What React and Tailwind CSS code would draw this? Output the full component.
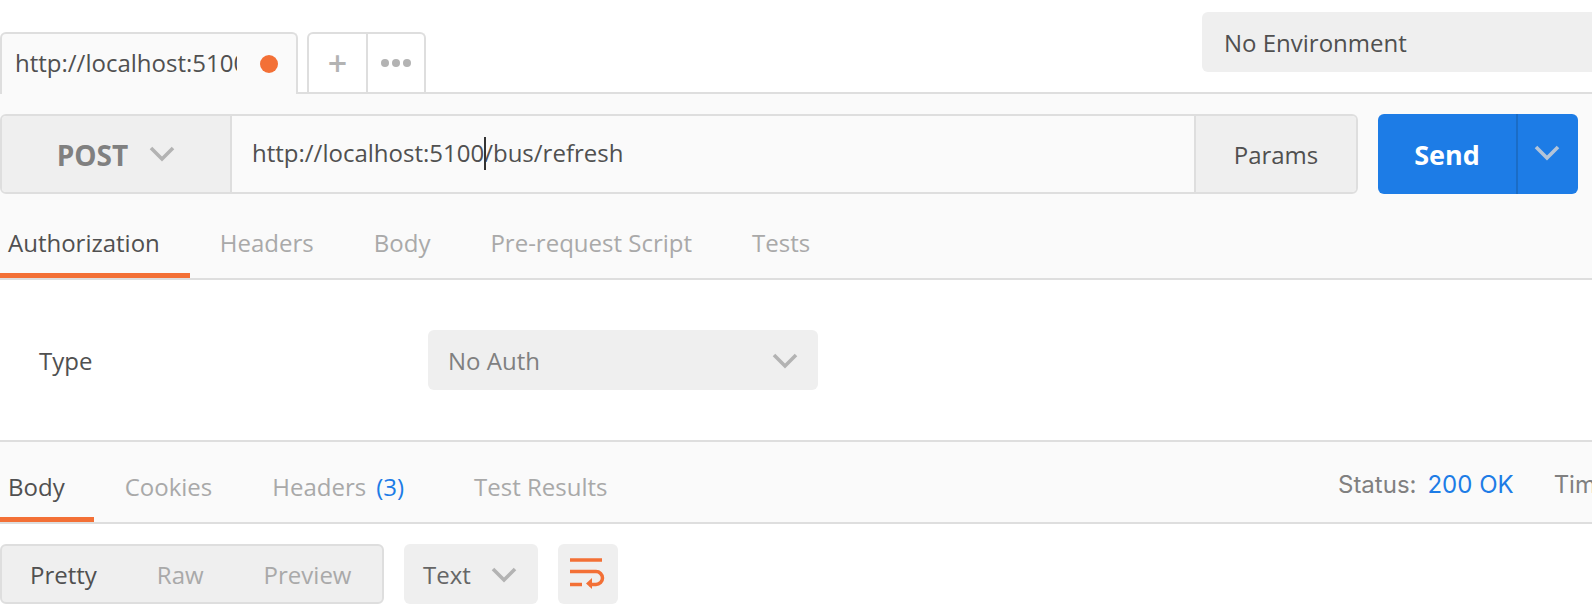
const font = { fontFamily: '"Open Sans", "Noto Sans", sans-serif' };

function Chevron({ className = '' }) {
  return (
    <svg className={className} width="26" height="16" viewBox="0 0 26 16" fill="none" stroke="currentColor" strokeWidth="3.6">
      <polyline points="2,2 13,13 24,2" />
    </svg>
  );
}

function Tab({ label, active, badge, className = '' }) {
  return (
    <div className={`relative flex h-full items-center whitespace-nowrap text-[24px] ${active ? 'text-[#505050]' : 'text-[#a9a9a9]'} ${className}`}>
      {label}
      {badge && <span className="ml-[10px] text-[#1d7ce6]">{badge}</span>}
      {active && <div className="absolute bottom-0 left-0 right-0 h-[5px] bg-[#f37036]" />}
    </div>
  );
}

function WrapIcon() {
  return (
    <svg width="36" height="32" viewBox="0 0 36 32" fill="none" stroke="#f37036" strokeWidth="3.5">
      <path d="M0 2h32" />
      <path d="M0 13.5h26a6.5 6.5 0 0 1 0 13h-7" />
      <path d="M0 26.5h12" />
      <path d="M22 20v11l-6-5.500z" fill="#f37036" stroke="none" />
    </svg>
  );
}

export default function App() {
  return (
    <div className="h-[616px] w-[1592px] overflow-hidden bg-white text-[#505050]" style={font}>
      <div className="flex h-[94px] items-end border-b-2 border-[#dedede] bg-white">
        <div className="relative -mb-[2px] flex h-[62px] w-[298px] items-center rounded-t-[6px] border-2 border-b-0 border-[#dedede] bg-[#fafafa] pl-[13px] pb-[2px]">
          <span className="w-[222px] overflow-hidden whitespace-nowrap text-[24px]">http://localhost:5100/bus/refresh</span>
          <span className="ml-[23px] mt-[2px] h-[18px] w-[18px] rounded-full bg-[#f37036]" />
        </div>
        <div className="ml-[9px] flex h-[60px] w-[119px] rounded-t-[6px] border-2 border-b-0 border-[#dedede] bg-white">
          <div className="flex w-[59px] items-center justify-center border-r-2 border-[#dedede] text-[34px] font-semibold leading-none text-[#b3b3b3]">+</div>
          <div className="flex flex-1 items-center justify-center gap-[3px]">
            <span className="h-[8px] w-[8px] rounded-full bg-[#b3b3b3]" />
            <span className="h-[8px] w-[8px] rounded-full bg-[#b3b3b3]" />
            <span className="h-[8px] w-[8px] rounded-full bg-[#b3b3b3]" />
          </div>
        </div>
        <div className="ml-auto flex h-full w-[411px] items-start">
          <div className="h-full w-[2px] bg-[#dedede]" />
          <div className="ml-[21px] mt-[12px] flex h-[60px] w-[420px] shrink-0 items-center whitespace-nowrap rounded-[6px] bg-[#efefef] pl-[22px] pt-[2px] text-[24px]">
            No Environment
            <Chevron className="ml-[192px] text-[#b3b3b3]" />
          </div>
        </div>
      </div>

      <div className="bg-[#fafafa]">
        <div className="flex h-[100px] items-start pt-[20px]">
          <div className="flex h-[80px] w-[1358px] overflow-hidden rounded-[6px] border-2 border-[#dedede]">
            <div className="flex w-[230px] items-center justify-center gap-[21px] border-r-2 border-[#dedede] bg-[#efefef] text-[#808080]">
              <span className="mt-[2px] text-[28px] font-bold">POST</span>
              <Chevron className="text-[#b3b3b3]" />
            </div>
            <div className="relative flex flex-1 items-center pl-[20px] text-[24px]">
              <span className="-mt-[2px]">http://localhost:5100/bus/refresh</span>
              <div className="absolute left-[252px] top-[21px] h-[33px] w-[2px] bg-[#333]" />
            </div>
            <div className="flex w-[162px] items-center justify-center border-l-2 border-[#dedede] bg-[#efefef] pt-[2px] text-[24px]">Params</div>
          </div>
          <div className="ml-[20px] flex h-[80px] w-[200px] overflow-hidden rounded-[6px] bg-[#1d7ce6] text-white">
            <div className="flex w-[140px] items-center justify-center border-r-2 border-[#1a6cc6] pt-[3px] text-[27px] font-bold">Send</div>
            <div className="flex flex-1 items-center justify-center"><Chevron className="-mt-[2px] mr-[2px] text-[#b3c4d8]" /></div>
          </div>
        </div>

        <div className="flex h-[86px] border-b-2 border-[#dedede]">
          <Tab label="Authorization" active className="pl-[8px] pr-[30px] pt-[14px]" />
          <Tab label="Headers" className="px-[30px] pt-[14px]" />
          <Tab label="Body" className="pl-[30px] pr-[30px] pt-[14px]" />
          <Tab label="Pre-request Script" className="px-[30px] pt-[14px]" />
          <Tab label="Tests" className="px-[30px] pt-[14px]" />
        </div>
      </div>

      <div className="flex h-[162px] items-start border-b-2 border-[#dedede] pl-[39px] pt-[50px]">
        <div className="flex h-[60px] w-[389px] items-center pt-[2px] text-[24px]">Type</div>
        <div className="flex h-[60px] w-[390px] items-center justify-between rounded-[6px] bg-[#efefef] pl-[20px] pr-[20px] pt-[2px] text-[24px] text-[#808080]">
          No Auth
          <Chevron className="text-[#b3b3b3]" />
        </div>
      </div>

      <div className="flex h-[82px] items-stretch border-b-2 border-[#dedede] bg-[#fafafa]">
        <Tab label="Body" active className="pl-[8px] pr-[29px] pt-[10px]" />
        <Tab label="Cookies" className="px-[31px] pt-[10px]" />
        <Tab label="Headers" badge="(3)" className="pl-[29px] pr-[31px] pt-[10px]" />
        <Tab label="Test Results" className="px-[39px] pt-[10px]" />
        <div className="ml-auto flex w-[254px] shrink-0 items-center overflow-hidden whitespace-nowrap pt-[6px] font-['Inter'] text-[24px] text-[#808080]">
          Status:
          <span className="ml-[11px] text-[#1d7ce6]">200 OK</span>
          <span className="ml-[40px]">Time</span>
        </div>
      </div>

      <div className="flex items-start pt-[20px]">
        <div className="flex h-[60px] w-[384px] items-center rounded-[6px] border-2 border-[#dedede] bg-[#efefef] pt-[2px] text-[24px] text-[#a9a9a9]">
          <span className="ml-[28px] text-[#505050]">Pretty</span>
          <span className="ml-[60px]">Raw</span>
          <span className="ml-[60px]">Preview</span>
        </div>
        <div className="ml-[20px] flex h-[60px] w-[134px] items-center rounded-[6px] bg-[#efefef] pl-[19px] pt-[2px] text-[24px] text-[#666]">
          Text
          <Chevron className="ml-[20px] text-[#b3b3b3]" />
        </div>
        <div className="ml-[20px] flex h-[60px] w-[60px] items-center justify-center rounded-[6px] bg-[#efefef]">
          <WrapIcon />
        </div>
      </div>
    </div>
  );
}
